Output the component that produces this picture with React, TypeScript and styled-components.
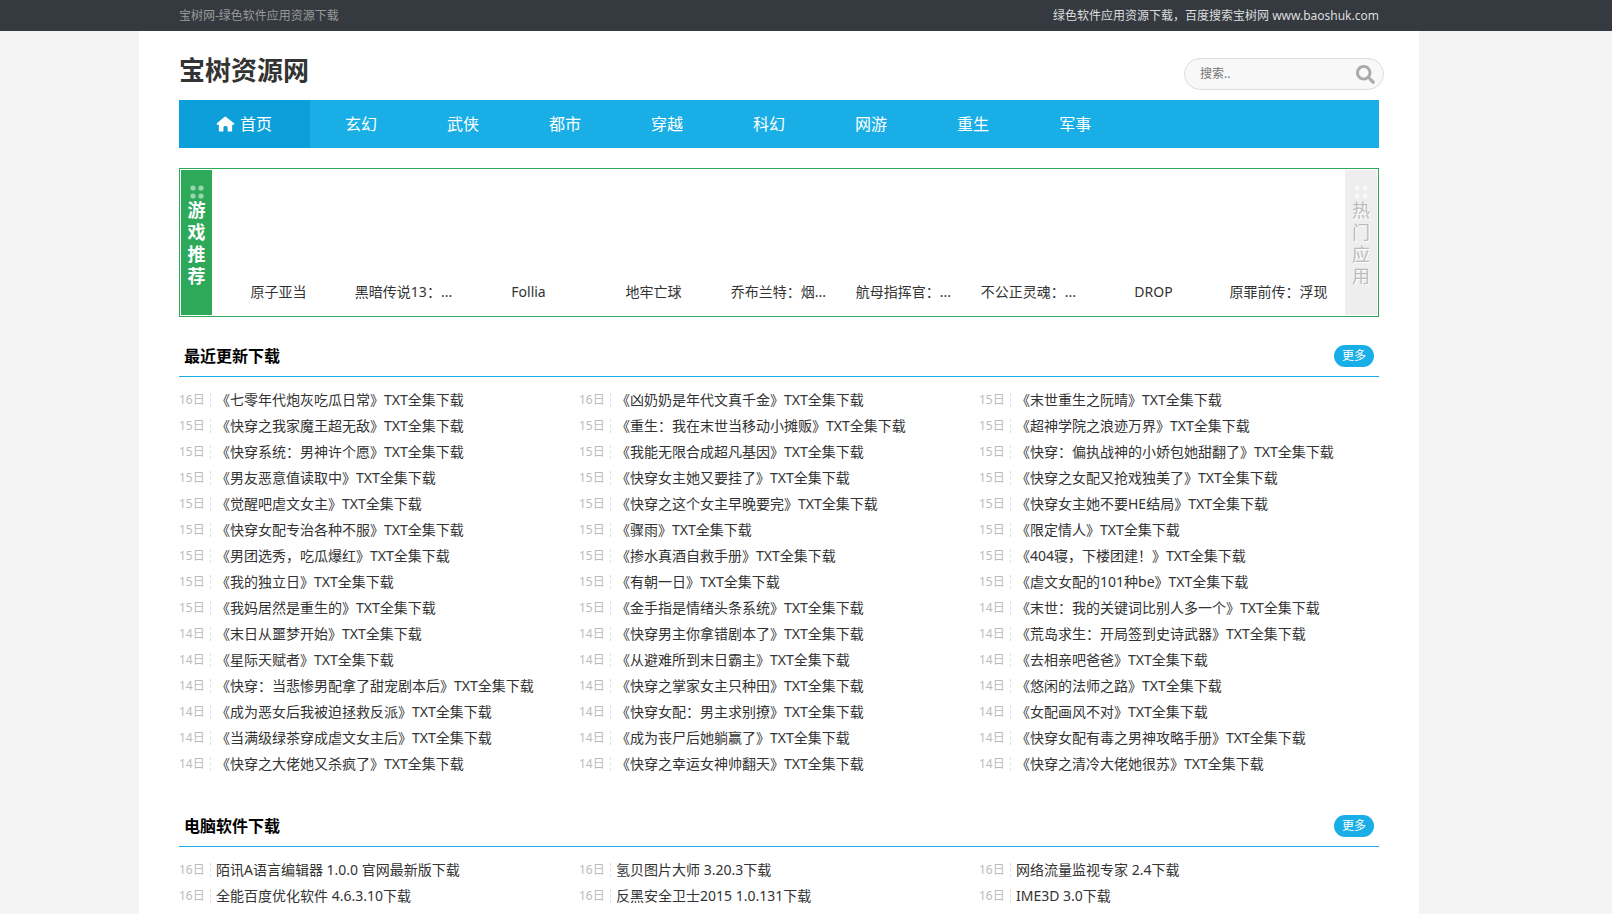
import React from "react";
import styled, { createGlobalStyle } from "styled-components";
import { FaSearch } from "react-icons/fa";

const GlobalStyle = createGlobalStyle`
  *, *::before, *::after { box-sizing: border-box; }
  body {
    margin: 0;
    background: #f4f4f4;
    color: #333;
    font: 14px/26px "Noto Sans", "Noto Sans CJK SC", sans-serif;
    text-spacing-trim: space-all;
  }
  h1, h2, p, ul { margin: 0; padding: 0; }
  ul { list-style: none; }
  a { color: inherit; text-decoration: none; }
`;

const TopBar = styled.div`
  background: #343a40;
  padding-right: 54px;
`;

const TopBarInner = styled.div`
  display: flex;
  justify-content: space-between;
  max-width: 1280px;
  margin: 0 auto;
  padding: 0 40px;
  font-size: 12px;
  line-height: 31px;
  color: #999;
`;

const TopNote = styled.p`
  color: #ddd;
`;

const Page = styled.div`
  padding-right: 54px;
`;

const Wrap = styled.div`
  max-width: 1280px;
  min-height: calc(100vh - 31px);
  margin: 0 auto;
  padding: 0 40px 5px;
  background: #fff;
`;

const Header = styled.header`
  display: flex;
  justify-content: space-between;
  align-items: flex-end;
  padding: 20px 0 10px;
`;

const SiteName = styled.h1`
  align-self: flex-start;
  font-size: 26px;
  line-height: 39px;
`;

const SearchForm = styled.form`
  display: flex;
  align-items: center;
  width: 200px;
  height: 32px;
  margin-right: -5px;
  padding: 0 8px 0 15px;
  border: 1px solid #ddd;
  border-radius: 16px;
  background: #f8f8f8;
`;

const SearchInput = styled.input`
  flex: 1;
  min-width: 0;
  padding: 0;
  border: 0;
  outline: 0;
  background: transparent;
  font: inherit;
  font-size: 12px;
  &::placeholder { color: #757575; opacity: 1; }
`;

const SearchButton = styled.button`
  display: flex;
  padding: 0;
  border: 0;
  background: none;
  color: #aaa;
  font-size: 19px;
  cursor: pointer;
`;

const Nav = styled.nav`
  display: flex;
  background: #1aaee6;
`;

const NavLink = styled.a<{ $active?: boolean }>`
  display: flex;
  align-items: center;
  gap: 5px;
  padding: ${(p) => (p.$active ? "0 38px 0 37px" : "0 35px")};
  background: ${(p) => (p.$active ? "#0c9fd9" : "transparent")};
  color: #fff;
  font-size: 16px;
  line-height: 48px;
`;

const Picks = styled.section`
  display: flex;
  margin-top: 20px;
  padding: 1px;
  border: 1px solid #2ea95a;
`;

const PickTab = styled.button<{ $active?: boolean }>`
  display: flex;
  flex-direction: column;
  align-items: center;
  width: ${(p) => (p.$active ? 31 : 32)}px;
  height: 145px;
  padding: 15px 0 0;
  border: 0;
  background: ${(p) => (p.$active ? "#2ea95a" : "#eee")};
  color: ${(p) => (p.$active ? "#fff" : "#bbb")};
  font: inherit;
  font-size: 18px;
  font-weight: ${(p) => (p.$active ? 700 : 400)};
  line-height: 22px;
  text-shadow: ${(p) => (p.$active ? "none" : "1px 1px 0 #fff")};
  cursor: pointer;
`;

const TabLabel = styled.span`
  width: 18px;
  white-space: normal;
  word-break: break-all;
`;

const PickList = styled.ul`
  flex: 1;
  display: grid;
  grid-template-columns: repeat(9, 1fr);
  align-items: end;
  padding: 0 4px 10px;
  text-align: center;
`;

const PickItem = styled.li`
  white-space: nowrap;
`;

const Section = styled.section<{ $first?: boolean }>`
  margin-top: ${(p) => (p.$first ? 20 : 30)}px;
`;

const SectionHead = styled.div`
  display: flex;
  justify-content: space-between;
  align-items: center;
  height: 40px;
  padding: 0 5px 2px;
  border-bottom: 1px solid #1aaee6;
`;

const SectionTitle = styled.h2`
  color: #000;
  font-size: 16px;
`;

const MoreLink = styled.a`
  padding: 0 8px;
  border-radius: 11px;
  background: #1aaee6;
  color: #fff;
  font-size: 12px;
  line-height: 22px;
`;

const Entries = styled.ul`
  display: grid;
  grid-template-columns: repeat(3, 1fr);
  padding-top: 10px;
`;

const Entry = styled.li`
  display: flex;
  align-items: center;
  white-space: nowrap;
`;

const Day = styled.time`
  width: 32px;
  margin-right: 5px;
  border-right: 1px dashed #ddd;
  color: #bbb;
  font-size: 12px;
  line-height: 14px;
`;

const HomeIcon = () => (
  <svg width="19" height="18" viewBox="0 0 20 18" fill="#fff" aria-hidden="true">
    <path d="M10 1 19.3 8.6Q19.8 9.6 18.8 9.8H17V16Q17 17 16 17H12.2V12.4Q12.2 11 10 11T7.8 12.4V17H4Q3 17 3 16V9.8H1.2Q.2 9.6.7 8.6L8.8 1.6Q10 .6 11.2 1.6Z" />
  </svg>
);

const Dots = ({ color }: { color: string }) => (
  <svg width="14" height="14" viewBox="0 0 14 14" fill={color} aria-hidden="true">
    <circle cx="3" cy="3" r="2.6" />
    <circle cx="11" cy="3" r="2.6" />
    <circle cx="3" cy="11" r="2.6" />
    <circle cx="11" cy="11" r="2.6" />
  </svg>
);

const categories = ["玄幻", "武侠", "都市", "穿越", "科幻", "网游", "重生", "军事"];

const games = [
  "原子亚当", "黑暗传说13：...", "Follia", "地牢亡球", "乔布兰特：烟...",
  "航母指挥官：...", "不公正灵魂：...", "DROP", "原罪前传：浮现",
];

type Row = [day: number, title: string];

const novels: Row[] = [
  [16, "七零年代炮灰吃瓜日常"], [16, "凶奶奶是年代文真千金"], [15, "末世重生之阮晴"],
  [15, "快穿之我家魔王超无敌"], [15, "重生：我在末世当移动小摊贩"], [15, "超神学院之浪迹万界"],
  [15, "快穿系统：男神许个愿"], [15, "我能无限合成超凡基因"], [15, "快穿：偏执战神的小娇包她甜翻了"],
  [15, "男友恶意值读取中"], [15, "快穿女主她又要挂了"], [15, "快穿之女配又抢戏独美了"],
  [15, "觉醒吧虐文女主"], [15, "快穿之这个女主早晚要完"], [15, "快穿女主她不要HE结局"],
  [15, "快穿女配专治各种不服"], [15, "骤雨"], [15, "限定情人"],
  [15, "男团选秀，吃瓜爆红"], [15, "掺水真酒自救手册"], [15, "404寝，下楼团建！"],
  [15, "我的独立日"], [15, "有朝一日"], [15, "虐文女配的101种be"],
  [15, "我妈居然是重生的"], [15, "金手指是情绪头条系统"], [14, "末世：我的关键词比别人多一个"],
  [14, "末日从噩梦开始"], [14, "快穿男主你拿错剧本了"], [14, "荒岛求生：开局签到史诗武器"],
  [14, "星际天赋者"], [14, "从避难所到末日霸主"], [14, "去相亲吧爸爸"],
  [14, "快穿：当悲惨男配拿了甜宠剧本后"], [14, "快穿之掌家女主只种田"], [14, "悠闲的法师之路"],
  [14, "成为恶女后我被迫拯救反派"], [14, "快穿女配：男主求别撩"], [14, "女配画风不对"],
  [14, "当满级绿茶穿成虐文女主后"], [14, "成为丧尸后她躺赢了"], [14, "快穿女配有毒之男神攻略手册"],
  [14, "快穿之大佬她又杀疯了"], [14, "快穿之幸运女神帅翻天"], [14, "快穿之清冷大佬她很苏"],
];

const software: Row[] = [
  [16, "陌讯A语言编辑器 1.0.0 官网最新版下载"], [16, "氢贝图片大师 3.20.3下载"], [16, "网络流量监视专家 2.4下载"],
  [16, "全能百度优化软件 4.6.3.10下载"], [16, "反黑安全卫士2015 1.0.131下载"], [16, "IME3D 3.0下载"],
];

const DownloadSection = ({ title, rows, first }: { title: string; rows: Row[]; first?: boolean }) => (
  <Section $first={first}>
    <SectionHead>
      <SectionTitle>{title}</SectionTitle>
      <MoreLink href="#">更多</MoreLink>
    </SectionHead>
    <Entries>
      {rows.map(([day, name]) => (
        <Entry key={name}>
          <Day>{`${day}日`}</Day>
          <a href="#">{name}</a>
        </Entry>
      ))}
    </Entries>
  </Section>
);

export default function App() {
  return (
    <>
      <GlobalStyle />
      <TopBar>
        <TopBarInner>
          <p>宝树网-绿色软件应用资源下载</p>
          <TopNote>绿色软件应用资源下载，百度搜索宝树网 www.baoshuk.com</TopNote>
        </TopBarInner>
      </TopBar>
      <Page>
        <Wrap>
          <Header>
            <SiteName>宝树资源网</SiteName>
            <SearchForm role="search">
              <SearchInput type="text" placeholder="搜索.." aria-label="搜索" />
              <SearchButton type="button" aria-label="搜索"><FaSearch /></SearchButton>
            </SearchForm>
          </Header>
          <Nav>
            <NavLink href="#" $active><HomeIcon />首页</NavLink>
            {categories.map((name) => <NavLink key={name} href="#">{name}</NavLink>)}
          </Nav>
          <Picks>
            <PickTab type="button" $active><Dots color="#9bd6ae" /><TabLabel>游戏推荐</TabLabel></PickTab>
            <PickList>
              {games.map((name) => <PickItem key={name}><a href="#">{name}</a></PickItem>)}
            </PickList>
            <PickTab type="button"><Dots color="#f8f8f8" /><TabLabel>热门应用</TabLabel></PickTab>
          </Picks>
          <DownloadSection first title="最近更新下载" rows={novels.map(([day, name]): Row => [day, `《${name}》TXT全集下载`])} />
          <DownloadSection title="电脑软件下载" rows={software} />
        </Wrap>
      </Page>
    </>
  );
}
